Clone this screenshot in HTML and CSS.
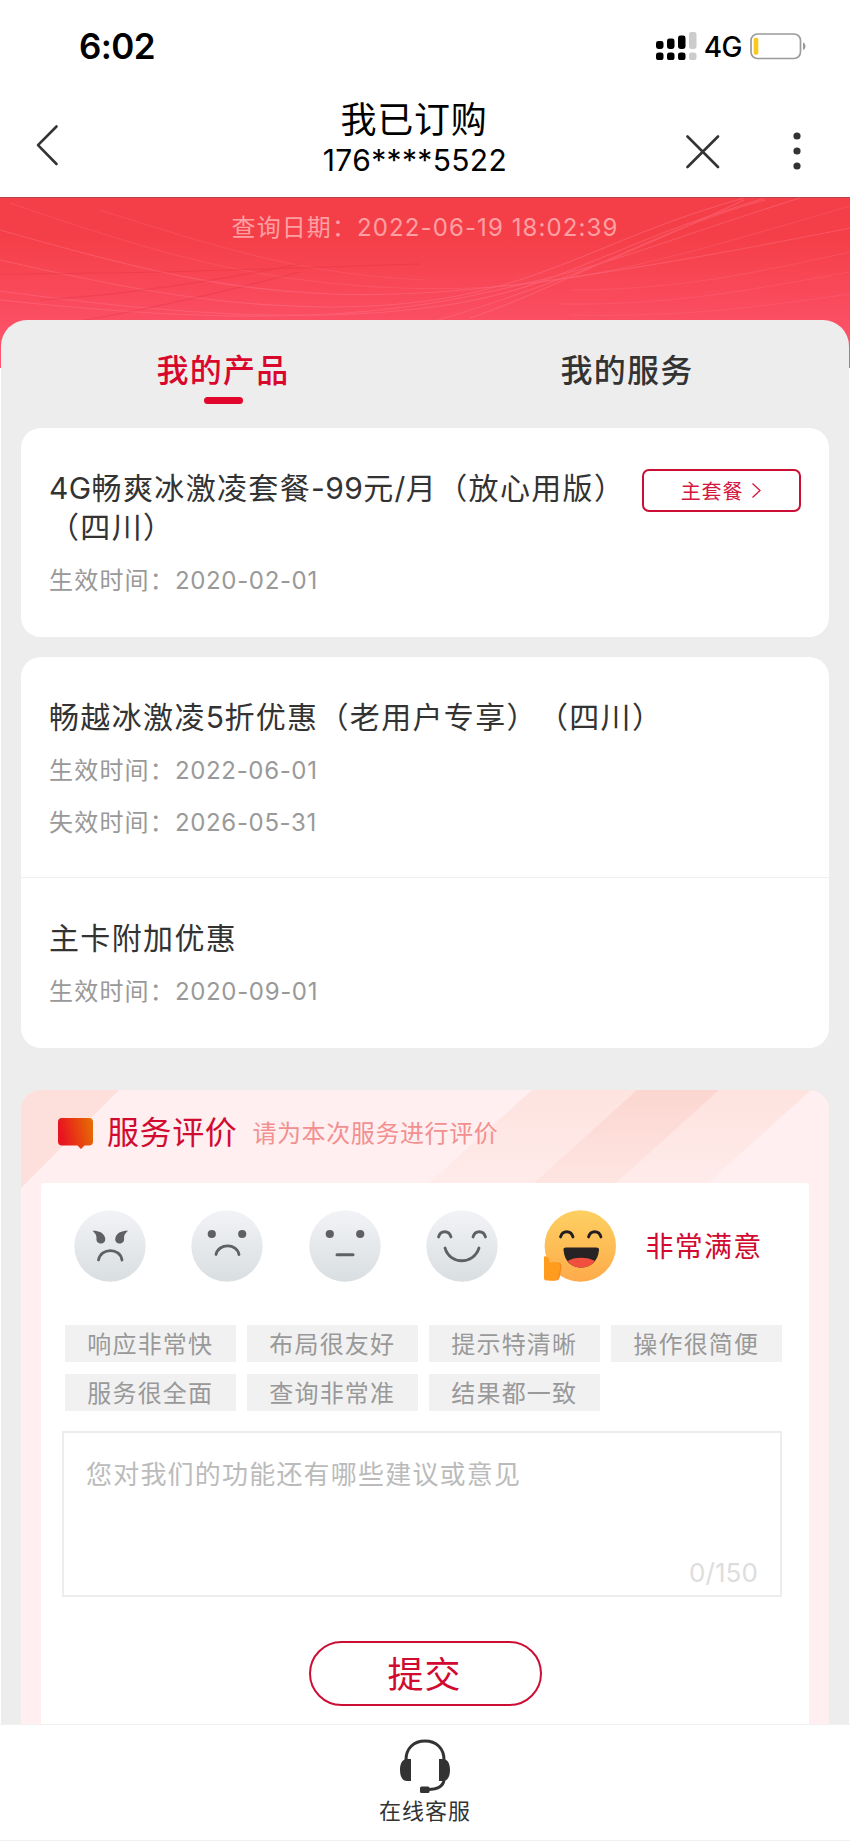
FILE: index.html
```html
<!DOCTYPE html>
<html lang="zh-CN">
<head>
<meta charset="utf-8">
<title>我已订购</title>
<link rel="stylesheet" href="styles.css">
</head>
<body>
<div class="screen">
  <header class="top">
    <div class="status">
      <span class="clock">6:02</span>
      <span class="status-right">
        <svg class="signal" width="41" height="28" viewBox="0 0 41 28">
          <g fill="#000"><rect x="0" y="9" width="7.5" height="8" rx="2.4"/><rect x="11" y="6.500" width="7.500" height="10.500" rx="2.400"/><rect x="22" y="3.500" width="7.500" height="13.500" rx="2.400"/>
          <rect x="0" y="20.500" width="7.500" height="7.500" rx="2.600"/><rect x="11" y="20.500" width="7.500" height="7.500" rx="2.600"/><rect x="22" y="20.500" width="7.500" height="7.500" rx="2.600"/></g>
          <g fill="#ccc"><rect x="33" y="0" width="7.500" height="17" rx="2.400"/><rect x="33" y="20.500" width="7.500" height="7.500" rx="2.600"/></g>
        </svg>
        <span class="net">4G</span>
        <svg class="battery" width="56" height="27" viewBox="0 0 56 27">
          <rect x="1" y="1" width="49.500" height="24.500" rx="6.500" fill="#fff" stroke="#9b9b9b" stroke-width="1.700"/>
          <rect x="3.700" y="4.800" width="4.600" height="17" rx="1.800" fill="#f8ca1c"/>
          <path d="M53 9.500c3.200 1 3.200 6.500 0 7.500z" fill="#999"/>
        </svg>
      </span>
    </div>
    <div class="nav">
      <svg class="back" width="24" height="42" viewBox="0 0 24 42"><path d="M20.500 2.500 2 21.200 20.500 40" fill="none" stroke="#333" stroke-width="2.600" stroke-linecap="round" stroke-linejoin="round"/></svg>
      <div class="nav-title">
        <h1>我已订购</h1>
        <p>176****5522</p>
      </div>
      <svg class="close" width="34" height="34" viewBox="0 0 34 34"><path d="M1.500 1.500 32 32M32 1.500 1.500 32" stroke="#333" stroke-width="2.600" stroke-linecap="round"/></svg>
      <svg class="more" width="8" height="38" viewBox="0 0 8 38" fill="#333"><circle cx="4" cy="4" r="3.600"/><circle cx="4" cy="19" r="3.600"/><circle cx="4" cy="34" r="3.600"/></svg>
    </div>
  </header>

  <section class="hero">
    <svg class="waves" width="850" height="171" viewBox="0 0 850 171" fill="none" stroke="#ff7b90" stroke-width="1.100">
      <g opacity=".38">
        <path d="M0 32C150 75 230 92 330 96S560 88 850 30"/>
        <path d="M0 62C130 92 260 118 400 106S600 40 744 0"/>
        <path d="M0 93C180 118 320 125 440 108S600 50 765 0"/>
        <path d="M0 102C150 118 320 130 470 98S640 50 800 0"/>
        <path d="M425 126C540 92 620 60 744 2"/>
        <path d="M470 120C560 90 660 30 765 2"/>
      </g>
      <g opacity=".22">
        <path d="M10 5C140 50 250 85 400 90S640 70 850 8"/>
        <path d="M100 12C220 50 300 76 425 82"/>
        <path d="M570 92C680 92 760 74 850 54"/>
        <path d="M560 106C680 108 770 88 850 74"/>
        <path d="M570 117C690 120 780 106 850 96"/>
      </g>
      <g stroke="#d8283c" opacity=".25">
        <path d="M0 76C120 76 240 72 420 66"/>
        <path d="M40 102C140 96 230 80 300 66"/>
        <path d="M50 128C150 112 230 92 300 74"/>
      </g>
    </svg>
    <p class="query">查询日期：2022-06-19 18:02:39</p>
  </section>

  <main class="panel">
    <nav class="tabs">
      <a class="tab tab-on">我的产品</a>
      <a class="tab">我的服务</a>
    </nav>

    <section class="card">
      <div class="item item-main">
        <div class="item-row">
          <h2 class="name"><span>4G</span>畅爽冰激凌套餐<span>-99</span>元<span>/</span>月（放心用版）（四川）</h2>
          <a class="plan">主套餐<svg width="11" height="17" viewBox="0 0 11 17"><path d="M1.500 1.500 9 8.500 1.500 15.500" fill="none" stroke="#d4163c" stroke-width="1.300"/></svg></a>
        </div>
        <p class="date">生效时间：<span>2020-02-01</span></p>
      </div>
    </section>

    <section class="card">
      <div class="item item-first">
        <h2 class="name">畅越冰激凌<span>5</span>折优惠（老用户专享）（四川）</h2>
        <p class="date">生效时间：<span>2022-06-01</span></p>
        <p class="date">失效时间：<span>2026-05-31</span></p>
      </div>
      <div class="item item-second">
        <h2 class="name">主卡附加优惠</h2>
        <p class="date">生效时间：<span>2020-09-01</span></p>
      </div>
    </section>

    <section class="rating">
      <svg class="stripes" width="808" height="100" viewBox="0 0 808 100">
        <defs>
          <linearGradient id="s1" x1="0" y1="0" x2="0" y2="1"><stop offset="0" stop-color="#fee3df"/><stop offset="1" stop-color="#feebea"/></linearGradient>
          <linearGradient id="s2" x1="0" y1="0" x2="0" y2="1"><stop offset="0" stop-color="#fcd6d0"/><stop offset="1" stop-color="#fee5e2"/></linearGradient>
        </defs>
        <path d="M0 0H98L0 98z" fill="#fde0dc"/>
        <path d="M511 0H790L687 93H408z" fill="url(#s1)"/>
        <path d="M616 0H698L595 93H513z" fill="url(#s2)"/>
      </svg>
      <div class="rating-head">
        <svg width="35" height="31" viewBox="0 0 35 31">
          <defs><linearGradient id="b" x1="0" y1=".6" x2="1" y2=".4"><stop offset=".1" stop-color="#e81420"/><stop offset="1" stop-color="#e66a05"/></linearGradient></defs>
          <path d="M4 0H31a4 4 0 0 1 4 4V23.500a4 4 0 0 1-4 4H26.500L23 31 19.500 27.500H4a4 4 0 0 1-4-4V4a4 4 0 0 1 4-4z" fill="url(#b)"/>
        </svg>
        <h2>服务评价</h2>
        <p>请为本次服务进行评价</p>
      </div>
      <div class="form">
        <div class="faces">
          <svg width="72" height="72" viewBox="0 0 72 72">
            <defs><linearGradient id="g" x1="0" y1="0" x2="0" y2="1"><stop offset="0" stop-color="#f2f3f6"/><stop offset="1" stop-color="#d9dee1"/></linearGradient></defs>
            <circle cx="36" cy="36" r="35.700" fill="url(#g)"/>
            <path d="M18.500 20.800C24 20.500 29.500 22.500 31 27.500 32 31 30 33.500 27 33.500 23.500 33.500 22 31 22.500 28 22.500 25 21 23 18.500 20.800zM54 20.800C48.500 20.500 43 22.500 41.500 27.500 40.500 31 42.500 33.500 45.500 33.500 49 33.500 50.500 31 50 28 50 25 51.500 23 54 20.800z" fill="#5e6064"/>
            <path d="M24.500 50C27 37.500 46 37.500 48 50" fill="none" stroke="#5e6064" stroke-width="2.800" stroke-linecap="round"/>
          </svg>
          <svg width="72" height="72" viewBox="0 0 72 72">
            <circle cx="36" cy="36" r="35.700" fill="url(#g)"/>
            <circle cx="20.800" cy="24" r="4.100" fill="#5e6064"/><circle cx="51.200" cy="24" r="4.100" fill="#5e6064"/>
            <path d="M25 44.500C27.500 33 46 33 48 44.500" fill="none" stroke="#5e6064" stroke-width="2.800" stroke-linecap="round"/>
          </svg>
          <svg width="72" height="72" viewBox="0 0 72 72">
            <circle cx="36" cy="36" r="35.700" fill="url(#g)"/>
            <circle cx="20.800" cy="24" r="4.100" fill="#5e6064"/><circle cx="51.200" cy="24" r="4.100" fill="#5e6064"/>
            <path d="M28 44.700H44" stroke="#5e6064" stroke-width="3" stroke-linecap="round"/>
          </svg>
          <svg width="72" height="72" viewBox="0 0 72 72">
            <circle cx="36" cy="36" r="35.700" fill="url(#g)"/>
            <path d="M12.500 27C14.500 20 23 20 25 27M47 27C49 20 57.500 20 59.500 27M19 38C24 55 47.500 55 53 38" fill="none" stroke="#5e6064" stroke-width="2.800" stroke-linecap="round"/>
          </svg>
          <svg width="72" height="72" viewBox="0 0 72 72">
            <defs><linearGradient id="y" x1="0" y1="0" x2="0" y2="1"><stop offset="0" stop-color="#fdd062"/><stop offset="1" stop-color="#feab4a"/></linearGradient></defs>
            <circle cx="36.300" cy="36" r="35.700" fill="url(#y)"/>
            <path d="M16.500 27C18.500 20 27 20 29 27M44.500 27C46.500 20 55 20 57 27" fill="none" stroke="#231f20" stroke-width="2.800" stroke-linecap="round"/>
            <path d="M19.500 40Q19 37.500 22 37.500H52Q55.500 37.500 55 40C54 51 47 57.500 37 57.500S20.500 51 19.500 40z" fill="#272223"/>
            <path d="M23.500 51C30 46.500 44 46.500 51 51 47.500 55.500 43 57.500 37 57.500S27 55.500 23.500 51z" fill="#f1503f"/>
            <path d="M8 52.500H14.500Q18 53 17.500 58L15.500 68Q14.500 70.500 12 70.500H5z" fill="#f58a1f"/>
            <path d="M0 46.500Q5 45 5.500 52.500H13Q16.500 53 16 58L14 68Q13 70.500 10.500 70.500H2.500Q0 70.500 0 68z" fill="#ff9c1d"/>
          </svg>
          <span class="verdict">非常满意</span>
        </div>
        <div class="tags">
          <span>响应非常快</span><span>布局很友好</span><span>提示特清晰</span><span>操作很简便</span>
          <span>服务很全面</span><span>查询非常准</span><span>结果都一致</span>
        </div>
        <div class="advice">
          <p>您对我们的功能还有哪些建议或意见</p>
          <p class="count">0/150</p>
        </div>
        <a class="submit">提交</a>
      </div>
    </section>
  </main>

  <footer class="service">
    <svg width="52" height="55" viewBox="0 0 52 55">
      <path d="M7 21C7 9 15 2 26 2S45 9 45 21M45 41C44 48 38 50.500 29 50.500" fill="none" stroke="#333" stroke-width="3"/>
      <path d="M12 20H8C3 20 1 25 1 31s2 11 7 11h4zM40 20h4c5 0 7 5 7 11s-2 11-7 11h-4z" fill="#333"/>
      <rect x="21" y="47.500" width="9.500" height="6.500" rx="1.500" fill="#333"/>
    </svg>
    <span>在线客服</span>
  </footer>
</div>
</body>
</html>
```
FILE: styles.css
```css
* { box-sizing: border-box; }
body, h1, h2, p { margin: 0; font-weight: 400; }
body {
  background: #fff;
  color: #333;
  font-family: Inter, "Noto Sans CJK SC", sans-serif;
  text-spacing-trim: space-all;
}
svg { display: block; flex: none; }
.screen {
  width: 850px;
  height: 1841px;
  display: flex;
  flex-direction: column;
  overflow: hidden;
}

/* status bar and navigation */
.top { height: 197px; flex: none; color: #000; }
.status {
  height: 92px;
  padding: 0 44px 0 79px;
  display: flex;
  align-items: center;
  justify-content: space-between;
}
.clock { font-size: 35px; font-weight: 600; line-height: 92px; letter-spacing: -.6px; }
.status-right { display: flex; align-items: center; }
.net { font-size: 28px; font-weight: 500; letter-spacing: -.5px; margin: 2px 8px 0 7px; }
.nav {
  height: 105px;
  padding: 0 48px 0 36px;
  display: flex;
  align-items: flex-start;
}
.back { margin-top: 32px; }
.nav-title { width: 200px; margin: 7px 0 0 255px; text-align: center; }
.nav-title h1 { font-size: 36px; line-height: 42px; letter-spacing: .7px; margin-left: -2px; }
.nav-title p { font-size: 30px; line-height: 38px; letter-spacing: .35px; }
.close { margin: 43px 0 0 171px; }
.more { margin: 40px 0 0 73px; }

/* red banner */
.hero {
  height: 171px;
  flex: none;
  position: relative;
  background: linear-gradient(#f53f48 0, #f53f48 40px, #fb4f64 125px, #fd5870 100%);
  border-top: 1px solid #b8424c;
}
.waves { position: absolute; left: 0; top: 0; }
.query {
  position: relative;
  padding-top: 12px;
  text-align: center;
  font-size: 24px;
  line-height: 36px;
  letter-spacing: 1.1px;
  color: #fda0a4;
}

/* grey sheet */
.panel {
  position: relative;
  flex: 1;
  min-height: 0;
  margin: -48px 1px 0;
  padding: 0 20px;
  background: #ededed;
  border-radius: 26px 26px 0 0;
  overflow: hidden;
}
.tabs { height: 108.4px; display: grid; grid-template-columns: 1fr 1fr; }
.tab {
  padding-top: 27px;
  display: flex;
  flex-direction: column;
  align-items: center;
  font-size: 32px;
  line-height: 48px;
  letter-spacing: 1.3px;
  font-weight: 500;
}
.tab-on { color: #d9072c; }
.tab-on::after {
  content: "";
  width: 39px;
  height: 7px;
  margin-top: 2px;
  border-radius: 4px;
  background: #e2062c;
}
.card { margin-bottom: 20px; background: #fff; border-radius: 20px; }
.item { padding: 0 28px; }
.item-main { height: 209px; padding-top: 41px; }
.item-row { display: flex; justify-content: space-between; align-items: flex-start; height: 77px; }
.name { font-size: 30px; line-height: 38.5px; letter-spacing: 1.35px; }
.name span { letter-spacing: .4px; }
.item-row .name { width: 585px; flex: none; }
.plan {
  width: 159px;
  height: 43px;
  border: 2px solid #cc0e34;
  border-radius: 7px;
  color: #d4163c;
  display: flex;
  align-items: center;
  justify-content: center;
  gap: 8px;
  font-size: 20px;
  letter-spacing: .8px;
}
.date { font-size: 24px; line-height: 36px; letter-spacing: 1.2px; color: #999; }
.date span { letter-spacing: .65px; }
.item-main .date { margin-top: 17px; }
.item-first { height: 221px; padding-top: 41px; border-bottom: 1px solid #eee; }
.item-first .date { margin: 16px 0 13px; }
.item-second { height: 170px; padding-top: 41px; }
.item-second .date { margin-top: 16px; }

/* service rating */
.rating {
  position: relative;
  margin-top: 42px;
  height: 700px;
  padding: 0 20px;
  background: #ffeff0;
  border-radius: 20px 20px 0 0;
  overflow: hidden;
}
.stripes { position: absolute; left: 0; top: 0; }
.rating-head {
  position: relative;
  height: 93px;
  padding: 0 0 7px 17px;
  display: flex;
  align-items: center;
}
.rating-head h2 { margin-left: 14px; font-size: 32px; letter-spacing: .6px; color: #d10a30; line-height: 44px; }
.rating-head p { margin: 2px 0 0 15px; font-size: 24px; letter-spacing: .6px; color: #f29090; line-height: 36px; }
.form { position: relative; height: 607px; padding: 27px 0 0; background: #fff; border-radius: 3px 3px 0 0; }
.faces { display: flex; gap: 45.6px; align-items: center; padding-left: 32.5px; }
.verdict { font-size: 28px; line-height: 40px; letter-spacing: 1.3px; color: #d10a30; margin: 2px 0 0 -16px; }
.tags {
  display: grid;
  grid-template-columns: repeat(4, 171.5px);
  gap: 12px 10.5px;
  margin: 43px 0 0 23.5px;
}
.tags span {
  height: 37px;
  line-height: 39px;
  background: #f1f1f1;
  color: #999;
  font-size: 24px;
  letter-spacing: 1.2px;
  text-align: center;
}
.advice {
  width: 720px;
  height: 166px;
  margin: 20px 0 0 21px;
  padding: 23px 22px 7px 22px;
  border: 2px solid #ededed;
  display: flex;
  flex-direction: column;
  justify-content: space-between;
  font-size: 26px;
  line-height: 38px;
  letter-spacing: 1.2px;
  color: #bbb;
}
.count { text-align: right; color: #ddd; line-height: 30px; letter-spacing: .1px; }
.submit {
  width: 233px;
  height: 65px;
  margin: 44px 0 0 268px;
  padding: 0 2px 3px 0;
  border: 2px solid #cc0e34;
  border-radius: 33px;
  color: #d10a30;
  font-size: 36px;
  letter-spacing: 1px;
  display: flex;
  align-items: center;
  justify-content: center;
}

/* footer */
.service {
  height: 117px;
  flex: none;
  padding-top: 14px;
  border-top: 1px solid #f0f0f0;
  border-bottom: 1px solid #f0f0f0;
  display: flex;
  flex-direction: column;
  align-items: center;
  font-size: 22px;
  line-height: 34px;
  letter-spacing: 1px;
}
```
